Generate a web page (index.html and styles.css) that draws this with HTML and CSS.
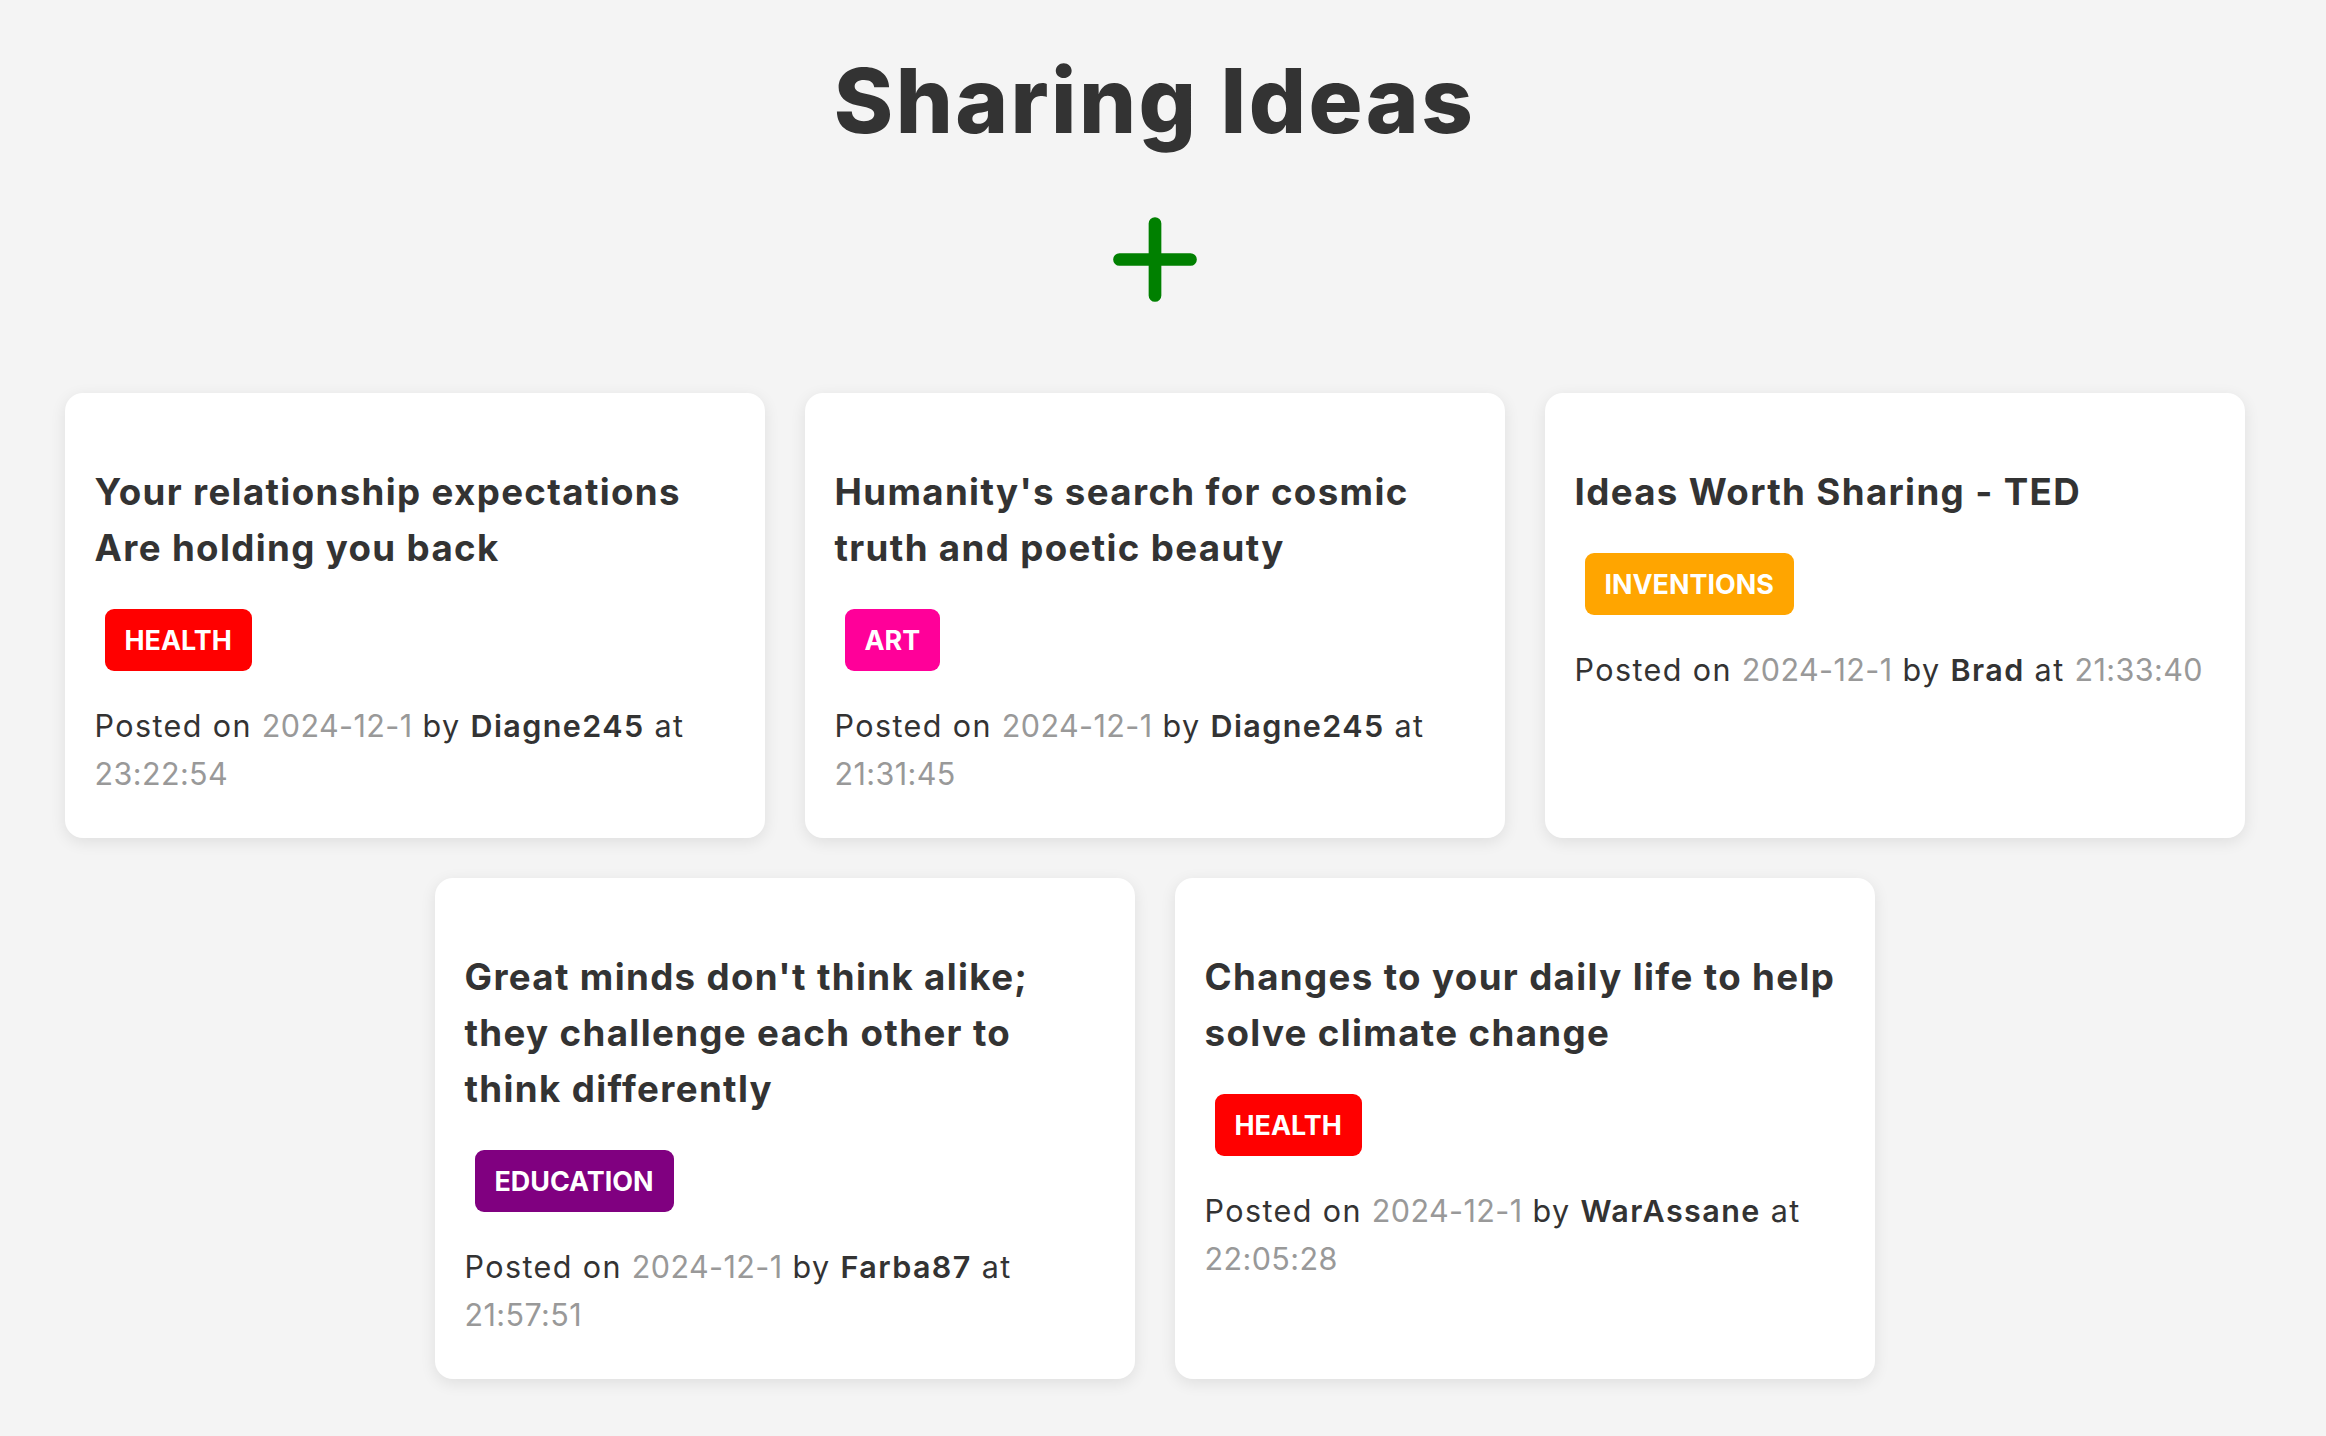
FILE: index.html
```
<!DOCTYPE html>
<html lang="en">
<head>
<meta charset="utf-8">
<title>Sharing Ideas</title>
<link rel="stylesheet" href="styles.css">
</head>
<body>
<main class="page">
  <h1 class="page-title">Sharing Ideas</h1>
  <button class="add-btn" type="button" aria-label="Add idea">
    <svg class="add-icon" viewBox="0 0 84 85" width="84" height="85" aria-hidden="true">
      <path d="M42 6.5 V78.5 M6.5 42.5 H77.5" stroke="#008000" stroke-width="12.7" stroke-linecap="round" fill="none"/>
    </svg>
  </button>
  <section class="cards">
    <article class="card">
      <h3 class="card-title">Your relationship expectations Are holding you back</h3>
      <div class="tag-row"><span class="tag tag-health">HEALTH</span></div>
      <p class="meta">Posted on <span class="muted">2024-12-1</span> by <strong class="author">Diagne245</strong> at <span class="muted">23:22:54</span></p>
    </article>
    <article class="card">
      <h3 class="card-title">Humanity's search for cosmic truth and poetic beauty</h3>
      <div class="tag-row"><span class="tag tag-art">ART</span></div>
      <p class="meta">Posted on <span class="muted">2024-12-1</span> by <strong class="author">Diagne245</strong> at <span class="muted">21:31:45</span></p>
    </article>
    <article class="card">
      <h3 class="card-title">Ideas Worth Sharing - TED</h3>
      <div class="tag-row"><span class="tag tag-inventions">INVENTIONS</span></div>
      <p class="meta">Posted on <span class="muted">2024-12-1</span> by <strong class="author">Brad</strong> at <span class="muted">21:33:40</span></p>
    </article>
    <article class="card">
      <h3 class="card-title">Great minds don't think alike; they challenge each other to think differently</h3>
      <div class="tag-row"><span class="tag tag-education">EDUCATION</span></div>
      <p class="meta">Posted on <span class="muted">2024-12-1</span> by <strong class="author">Farba87</strong> at <span class="muted">21:57:51</span></p>
    </article>
    <article class="card">
      <h3 class="card-title">Changes to your daily life to help solve climate change</h3>
      <div class="tag-row"><span class="tag tag-health">HEALTH</span></div>
      <p class="meta">Posted on <span class="muted">2024-12-1</span> by <strong class="author">WarAssane</strong> at <span class="muted">22:05:28</span></p>
    </article>
  </section>
</main>
</body>
</html>
```
FILE: styles.css
```
html, body {
  margin: 0;
  padding: 0;
  background: #f4f4f4;
}

body {
  font-family: Inter, "Noto Sans", "Liberation Sans", sans-serif;
  color: #333;
}

.page {
  margin-right: 17px;
  padding: 51px 0 40px;
  display: flex;
  flex-direction: column;
  align-items: center;
}

.page-title {
  margin: 0;
  font-size: 90px;
  line-height: 100px;
  font-weight: 800;
  letter-spacing: 2.4px;
  color: #333;
  text-align: center;
}

.add-btn {
  margin: 66px 0 0;
  padding: 0;
  border: 0;
  background: transparent;
  cursor: pointer;
  display: block;
  line-height: 0;
}

.add-icon {
  display: block;
}

.cards {
  margin-top: 91px;
  width: 100%;
  display: flex;
  flex-wrap: wrap;
  justify-content: center;
  gap: 40px;
}

.card {
  box-sizing: border-box;
  width: 700px;
  padding: 71px 30px 40px;
  background: #fff;
  border-radius: 18px;
  box-shadow: 0 4px 16px rgba(0, 0, 0, 0.09);
}

.card-title {
  margin: 0 0 33px;
  font-size: 36.7px;
  line-height: 56px;
  font-weight: 700;
  letter-spacing: 1.35px;
  color: #333;
}

.tag-row {
  display: flex;
}

.tag {
  display: inline-block;
  margin-left: 10px;
  padding: 10px 20px;
  height: 42px;
  line-height: 42px;
  border-radius: 9px;
  font-size: 26.9px;
  font-weight: 700;
  color: #fff;
}

.tag-health { background: #ff0000; }
.tag-art { background: #ff0099; }
.tag-inventions { background: #ffa500; }
.tag-education { background: #800080; }

.meta {
  margin: 31px 0 0;
  font-size: 30.5px;
  line-height: 48px;
  font-weight: 400;
  letter-spacing: 1.4px;
  color: #333;
}

.muted {
  color: #999;
  letter-spacing: 0.4px;
}

.author {
  font-weight: 600;
  color: #333;
}
```
